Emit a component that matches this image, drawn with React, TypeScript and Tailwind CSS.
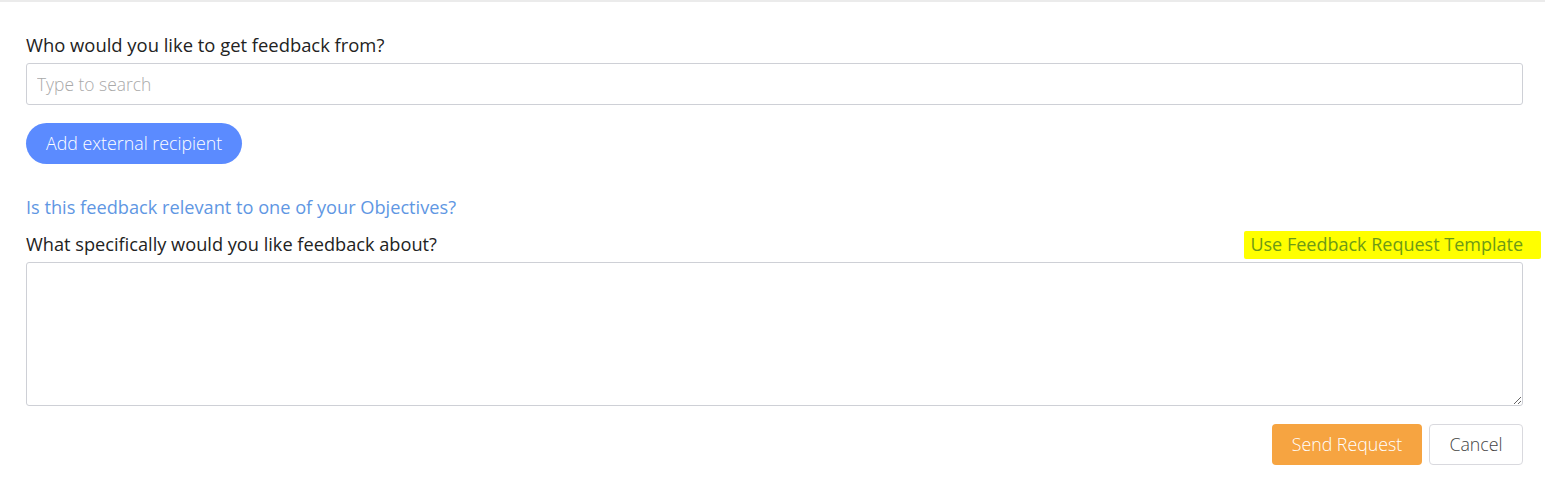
import React from "react";

export default function App() {
  const font = { fontFamily: '"Open Sans", "Noto Sans", sans-serif' };
  return (
    <div className="w-[1545px] h-[490px] bg-white border-t-2 border-[#ebebeb] text-[#222]" style={font}>
      <div className="pl-[26px] pr-[22px] pt-[31px]">
        <div className="text-[18.4px] leading-[24px] text-[#222]">Who would you like to get feedback from?</div>
        <input
          className="mt-[6px] block w-full h-[42px] border border-[#ced0d6] rounded-[3px] px-[10px] text-[17.4px] font-light outline-none placeholder:text-[#a9a9a9]"
          placeholder="Type to search"
          style={font}
        />
        <button className="mt-[18px] h-[41px] px-[20px] rounded-full bg-[#5b8bff] text-white text-[17.8px] font-light" style={font}>
          Add external recipient
        </button>
        <div className="mt-[31px] text-[18.2px] leading-[24px] text-[#5f97e3]">Is this feedback relevant to one of your Objectives?</div>
        <div className="mt-[13px] flex justify-between items-center">
          <div className="text-[18.2px] leading-[24px]">What specifically would you like feedback about?</div>
          <div className="relative text-[18px] leading-[24px] text-[#6d9a16]">
            <span className="absolute left-[-6px] right-[-18px] top-[-1px] bottom-[-3px] bg-[#ffff00] rounded-[2px]"></span>
            <span className="relative">Use Feedback Request Template</span>
          </div>
        </div>
        <textarea
          className="mt-[6px] block w-full h-[144px] border border-[#ced0d6] rounded-[3px] px-[10px] py-[6px] text-[16px] outline-none"
          style={font}
        />
        <div className="mt-[18px] flex justify-end gap-[7px]">
          <button className="h-[41px] w-[150px] rounded-[4px] bg-[#f6a441] text-white text-[17.8px] font-light" style={font}>
            Send Request
          </button>
          <button className="h-[41px] w-[94px] rounded-[4px] bg-white border border-[#d9d9de] text-[#444] text-[17.8px] font-light" style={font}>
            Cancel
          </button>
        </div>
      </div>
    </div>
  );
}
